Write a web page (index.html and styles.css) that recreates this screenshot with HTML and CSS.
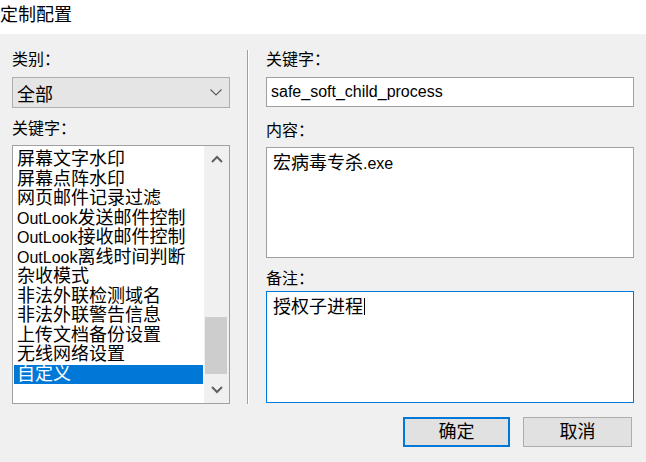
FILE: index.html
```html
<!DOCTYPE html>
<html>
<head>
    <title>定制配置</title>
    <link rel="stylesheet" href="styles.css">
</head>
<body>
    <div class="titlebar">定制配置</div>
    <div class="dialog">
        <div class="panel">
            <div class="left">
                <div class="label">类别：</div>
                <div class="combo">
                    <span>全部</span>
                    <svg class="chevron" width="12" height="7" viewBox="0 0 12 7"><polyline points="0.5,0.5 6,6 11.5,0.5" fill="none" stroke="#606060" stroke-width="1.2"/></svg>
                </div>
                <div class="label label-gap">关键字：</div>
                <div class="listbox">
                    <div class="items">
                        <div class="item">屏幕文字水印</div>
                        <div class="item">屏幕点阵水印</div>
                        <div class="item">网页邮件记录过滤</div>
                        <div class="item"><span class="lat">OutLook</span>发送邮件控制</div>
                        <div class="item"><span class="lat">OutLook</span>接收邮件控制</div>
                        <div class="item"><span class="lat">OutLook</span>离线时间判断</div>
                        <div class="item">杂收模式</div>
                        <div class="item">非法外联检测域名</div>
                        <div class="item">非法外联警告信息</div>
                        <div class="item">上传文档备份设置</div>
                        <div class="item">无线网络设置</div>
                        <div class="item selected">自定义</div>
                    </div>
                    <div class="scrollbar">
                        <div class="scroll-btn">
                            <svg width="12" height="8" viewBox="0 0 12 8"><polyline points="1,7 6,2 11,7" fill="none" stroke="#606060" stroke-width="2"/></svg>
                        </div>
                        <div class="track"><div class="thumb"></div></div>
                        <div class="scroll-btn">
                            <svg width="12" height="8" viewBox="0 0 12 8"><polyline points="1,1 6,6 11,1" fill="none" stroke="#606060" stroke-width="2"/></svg>
                        </div>
                    </div>
                </div>
            </div>
            <div class="separator"></div>
            <div class="right">
                <div class="label">关键字：</div>
                <div class="textbox">safe_soft_child_process</div>
                <div class="label label-gap2">内容：</div>
                <div class="memo content">宏病毒专杀<span class="lat">.exe</span></div>
                <div class="label label-gap3">备注：</div>
                <div class="memo notes focused">授权子进程<span class="caret"></span></div>
            </div>
        </div>
        <div class="footer">
            <div class="btn default">确定</div>
            <div class="btn">取消</div>
        </div>
    </div>
</body>
</html>
```

FILE: styles.css
```css
body {
    margin: 0;
    width: 646px;
    height: 462px;
    overflow: hidden;
    font-family: "Liberation Sans", "Noto Sans CJK SC", sans-serif;
    color: #000;
    background-color: #f0f0f0;
}
.titlebar {
    height: 34px;
    background-color: #fff;
    font-size: 18px;
    line-height: 30px;
}
.dialog {
    padding: 16px 12px 0 12px;
}
.panel {
    display: flex;
}
.left {
    width: 218px;
}
.right {
    width: 368px;
}
.separator {
    width: 1px;
    margin: 0 17px;
    background-color: #a0a0a0;
    border-right: 1px solid #fff;
}
.label {
    font-size: 16px;
    line-height: 20px;
    height: 20px;
}
.label-gap {
    margin-top: 11px;
}
.label-gap2 {
    margin-top: 14px;
}
.label-gap3 {
    margin-top: 11px;
}
.combo {
    margin-top: 7px;
    height: 31px;
    box-sizing: border-box;
    border: 1px solid #adadad;
    background-color: #e5e5e5;
    display: flex;
    align-items: center;
    justify-content: space-between;
    padding: 0 7px 0 4px;
    font-size: 18px;
}
.listbox {
    margin-top: 6px;
    height: 259px;
    box-sizing: border-box;
    border: 1px solid #a0a0a0;
    background-color: #fff;
    display: flex;
}
.items {
    flex: 1;
    padding-top: 4px;
    overflow: hidden;
}
.item {
    font-size: 18px;
    line-height: 19.5px;
    height: 19.5px;
    margin: 0 1px;
    padding-left: 3px;
    white-space: nowrap;
}
.lat {
    font-size: 16px;
}
.item.selected {
    background-color: #0078d7;
    color: #fff;
}
.scrollbar {
    width: 25px;
    background-color: #f0f0f0;
    display: flex;
    flex-direction: column;
}
.scroll-btn {
    height: 26px;
    display: flex;
    align-items: center;
    justify-content: center;
}
.track {
    flex: 1;
}
.thumb {
    margin: 145px 2px 0 1px;
    height: 57px;
    background-color: #cdcdcd;
}
.textbox {
    margin-top: 7px;
    height: 30px;
    box-sizing: border-box;
    border: 1px solid #a0a0a0;
    background-color: #fff;
    font-size: 16px;
    line-height: 28px;
    padding-left: 4px;
}
.memo {
    box-sizing: border-box;
    border: 1px solid #a0a0a0;
    background-color: #fff;
    font-size: 18px;
    line-height: 22px;
    padding: 4px 6px;
}
.content {
    margin-top: 6px;
    height: 111px;
}
.notes {
    margin-top: 2px;
    height: 112px;
}
.focused {
    border-color: #0078d7;
}
.caret {
    display: inline-block;
    width: 1px;
    height: 17px;
    background-color: #000;
    vertical-align: -2px;
    margin-left: 1px;
}
.footer {
    display: flex;
    justify-content: flex-end;
    gap: 13px;
    margin-top: 13px;
    padding-right: 2px;
}
.btn {
    width: 109px;
    height: 30px;
    box-sizing: border-box;
    border: 1px solid #adadad;
    background-color: #e1e1e1;
    font-size: 18px;
    line-height: 28px;
    text-align: center;
}
.btn.default {
    width: 107px;
    border: 2px solid #0078d7;
    line-height: 26px;
}
```
